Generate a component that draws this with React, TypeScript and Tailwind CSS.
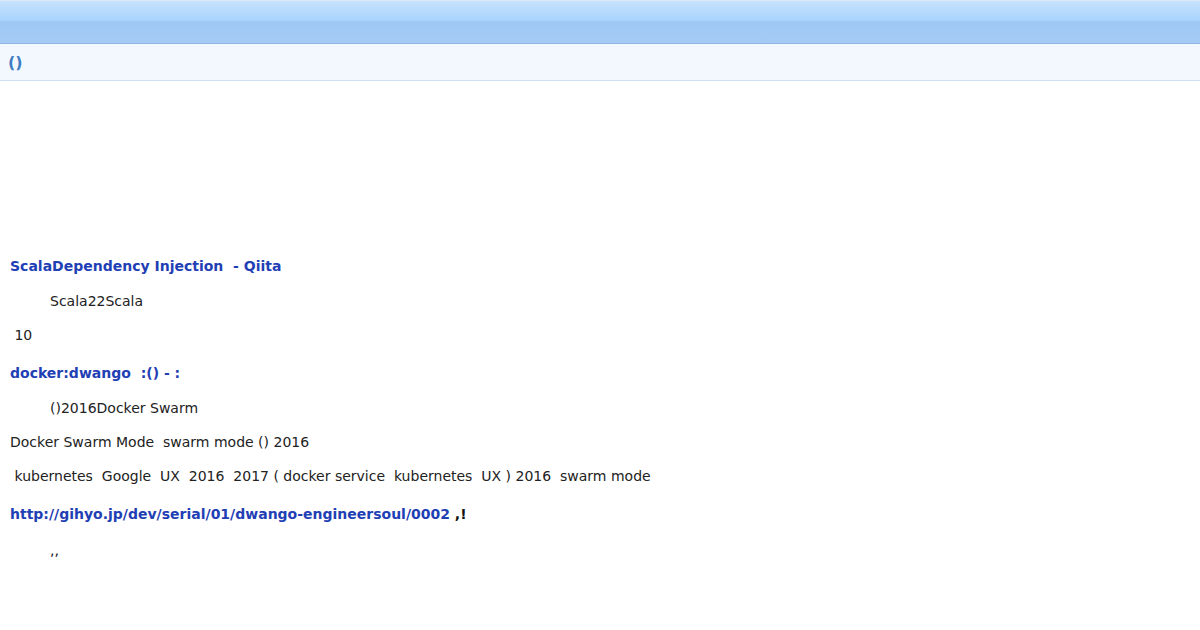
export default function App() {
  return (
    <div
      className="min-h-[630px] bg-white text-[14px] leading-[20px] text-[#222]"
      style={{ fontFamily: '"DejaVu Sans", sans-serif' }}
    >
      {/* top bar */}
      <div className="flex h-[44px] flex-col border-t border-[#dbe8f6] border-b border-b-[#8fb6de]">
        <div className="h-[20px] bg-gradient-to-b from-[#c6e2fd] to-[#a9d3fc]" />
        <div className="flex-1 bg-gradient-to-b from-[#9fc8f4] to-[#a3cbf5]" />
      </div>
      <div className="flex h-[37px] items-center border-b border-[#cddff0] bg-[#f3f8fe] px-[8px] pt-[2px]">
        <span className="text-[16px] font-bold text-[#3f7cc2]">()</span>
      </div>

      <div className="flex flex-col px-[10px] pt-[175px]">
        <a className="font-bold text-[#1f40b5]">ScalaDependency Injection&nbsp; - Qiita</a>
        <p className="mt-[15px] indent-[40px]">Scala22Scala</p>
        <p className="mt-[14px] whitespace-pre"> 10</p>

        <a className="mt-[18px] font-bold text-[#1f40b5]">docker:dwango&nbsp; :() - :</a>
        <p className="mt-[15px] indent-[40px]">()2016Docker Swarm</p>
        <p className="mt-[14px] whitespace-pre">Docker Swarm Mode  swarm mode () 2016</p>
        <p className="mt-[14px] whitespace-pre">
          {" kubernetes  Google  UX  2016  2017 ( docker service  kubernetes  UX ) 2016  swarm mode"}
        </p>

        <p className="mt-[18px] font-bold">
          <a className="text-[#1f40b5]">http://gihyo.jp/dev/serial/01/dwango-engineersoul/0002</a>
          <span className="text-[#111]"> ,!</span>
        </p>
        <p className="mt-[16px] indent-[40px]">,,</p>
      </div>
    </div>
  );
}
